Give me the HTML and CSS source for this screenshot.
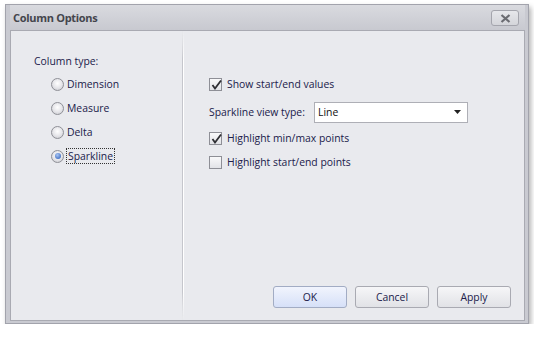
FILE: index.html
```html
<!doctype html>
<html>
  <head>
    <title>Column Options</title>
    <link rel="stylesheet" href="styles.css">
  </head>
  <body>
    <div class="window">
      <div class="titlebar">
        <div class="title">Column Options</div>
        <div class="close-btn">
          <svg width="11" height="9" viewBox="0 0 11 9">
            <path d="M1.5 1 L9.5 8 M9.5 1 L1.5 8" stroke="#6b6c72" stroke-width="2.2" fill="none"/>
          </svg>
        </div>
      </div>

      <div class="client">
        <div class="left-panel">
          <div class="group-label">Column type:</div>
          <div class="radio-row"><span class="radio"></span><span class="label">Dimension</span></div>
          <div class="radio-row"><span class="radio"></span><span class="label">Measure</span></div>
          <div class="radio-row"><span class="radio"></span><span class="label">Delta</span></div>
          <div class="radio-row"><span class="radio checked"></span><span class="label focused">Sparkline</span></div>
        </div>

        <div class="divider"></div>

        <div class="right-panel">
          <div class="check-row">
            <span class="checkbox checked">
              <svg width="12" height="12" viewBox="0 0 12 12"><path d="M2.5 6 L5 9.5 L11 1.5" stroke="#2f2f33" stroke-width="1.8" fill="none"/></svg>
            </span>
            <span class="label">Show start/end values</span>
          </div>

          <div class="select-row">
            <span class="label">Sparkline view type:</span>
            <div class="select">
              <span>Line</span>
              <svg width="7" height="4" viewBox="0 0 7 4"><path d="M0 0 H7 L3.5 4 Z" fill="#222"/></svg>
            </div>
          </div>

          <div class="check-row">
            <span class="checkbox checked">
              <svg width="12" height="12" viewBox="0 0 12 12"><path d="M2.5 6 L5 9.5 L11 1.5" stroke="#2f2f33" stroke-width="1.8" fill="none"/></svg>
            </span>
            <span class="label">Highlight min/max points</span>
          </div>

          <div class="check-row">
            <span class="checkbox"></span>
            <span class="label">Highlight start/end points</span>
          </div>

          <div class="buttons">
            <button class="button default">OK</button>
            <button class="button">Cancel</button>
            <button class="button">Apply</button>
          </div>
        </div>
      </div>
    </div>
  </body>
</html>
```

FILE: styles.css
```css
* {
  box-sizing: border-box;
  margin: 0;
  padding: 0;
}

body {
  background: #ffffff;
  font-family: "Open Sans", "DejaVu Sans", sans-serif;
  font-size: 10.4px;
  color: #20204a;
}

.window {
  margin: 4px 0 0 5px;
  width: 524px;
  height: 320px;
  display: flex;
  flex-direction: column;
  background: #c9cad1;
  border: 1px solid #a2a3ac;
  padding: 0 3px 2px 4px;
  box-shadow: 2px 3px 5px rgba(0, 0, 0, 0.3);
}

.titlebar {
  height: 25px;
  display: flex;
  align-items: center;
  justify-content: space-between;
  padding: 0 6px 0 3px;
  background: linear-gradient(#d9dadf, #c8c9d0);
}

.title {
  font-weight: bold;
  font-size: 11px;
  color: #44454c;
  letter-spacing: -0.3px;
}

.close-btn {
  width: 28px;
  height: 16px;
  border: 1px solid #a4a5ad;
  border-radius: 3px;
  background: linear-gradient(#e6e7eb, #d4d5da);
  display: flex;
  align-items: center;
  justify-content: center;
  margin-top: 1px;
}

.client {
  flex: 1;
  display: flex;
  background: #e9eaee;
  border: 1px solid #a9aab2;
}

.left-panel {
  width: 171px;
  padding: 22px 0 0 23px;
}

.group-label {
  height: 16px;
  line-height: 16px;
  margin-bottom: 3px;
}

.radio-row {
  display: flex;
  align-items: center;
  height: 24px;
  padding-left: 17px;
}

.radio {
  width: 13px;
  height: 13px;
  border-radius: 50%;
  border: 1px solid #8f9097;
  background: radial-gradient(circle at 50% 40%, #ffffff 0%, #e4e4e8 55%, #c2c3c8 100%);
  margin-right: 3px;
  position: relative;
}

.radio.checked::after {
  content: "";
  position: absolute;
  left: 2.5px;
  top: 2.5px;
  width: 6px;
  height: 6px;
  border-radius: 50%;
  background: radial-gradient(circle at 40% 35%, #a9c6f3 0%, #4c78c8 70%, #2f5aa8 100%);
}

.label {
  white-space: nowrap;
}

.label.focused {
  outline: 1px dotted #333;
  padding: 0 1px;
}

.divider {
  width: 2px;
  background: linear-gradient(rgba(255, 255, 255, 0), #ffffff 10%, #ffffff 90%, rgba(255, 255, 255, 0));
  border-left: 1px solid;
  border-image: linear-gradient(rgba(200, 201, 207, 0), #c5c6cc 10%, #c5c6cc 90%, rgba(200, 201, 207, 0)) 1;
}

.right-panel {
  flex: 1;
  display: flex;
  flex-direction: column;
  padding: 45px 13px 12px 25px;
}

.check-row {
  display: flex;
  align-items: center;
  height: 16px;
  margin-bottom: 8px;
}

.checkbox {
  width: 13px;
  height: 13px;
  border: 1px solid #8e8f96;
  background: linear-gradient(#f9f9fa, #e2e3e7);
  margin-right: 5px;
  display: flex;
  align-items: flex-end;
  justify-content: flex-start;
}

.checkbox svg {
  margin: 0 -4px -1px 0;
}

.select-row {
  display: flex;
  align-items: center;
  height: 22px;
  margin: 1px 0 7px;
}

.select-row .label {
  width: 105px;
}

.select {
  width: 154px;
  height: 21px;
  border: 1px solid #aeafb6;
  background: #ffffff;
  display: flex;
  align-items: center;
  justify-content: space-between;
  padding: 0 6px 0 3px;
  color: #111;
}

.buttons {
  margin-top: auto;
  display: flex;
  justify-content: flex-end;
  gap: 8px;
}

.button {
  width: 74px;
  height: 22px;
  border: 1px solid #a9aab2;
  border-radius: 3px;
  background: linear-gradient(#f6f6f8, #e1e2e6);
  font-family: "Open Sans", "DejaVu Sans", sans-serif;
  font-size: 10.4px;
  color: #20204a;
}

.button.default {
  background: linear-gradient(#f1f4fd, #d6e0f8);
  border-color: #a2acc4;
}
```
